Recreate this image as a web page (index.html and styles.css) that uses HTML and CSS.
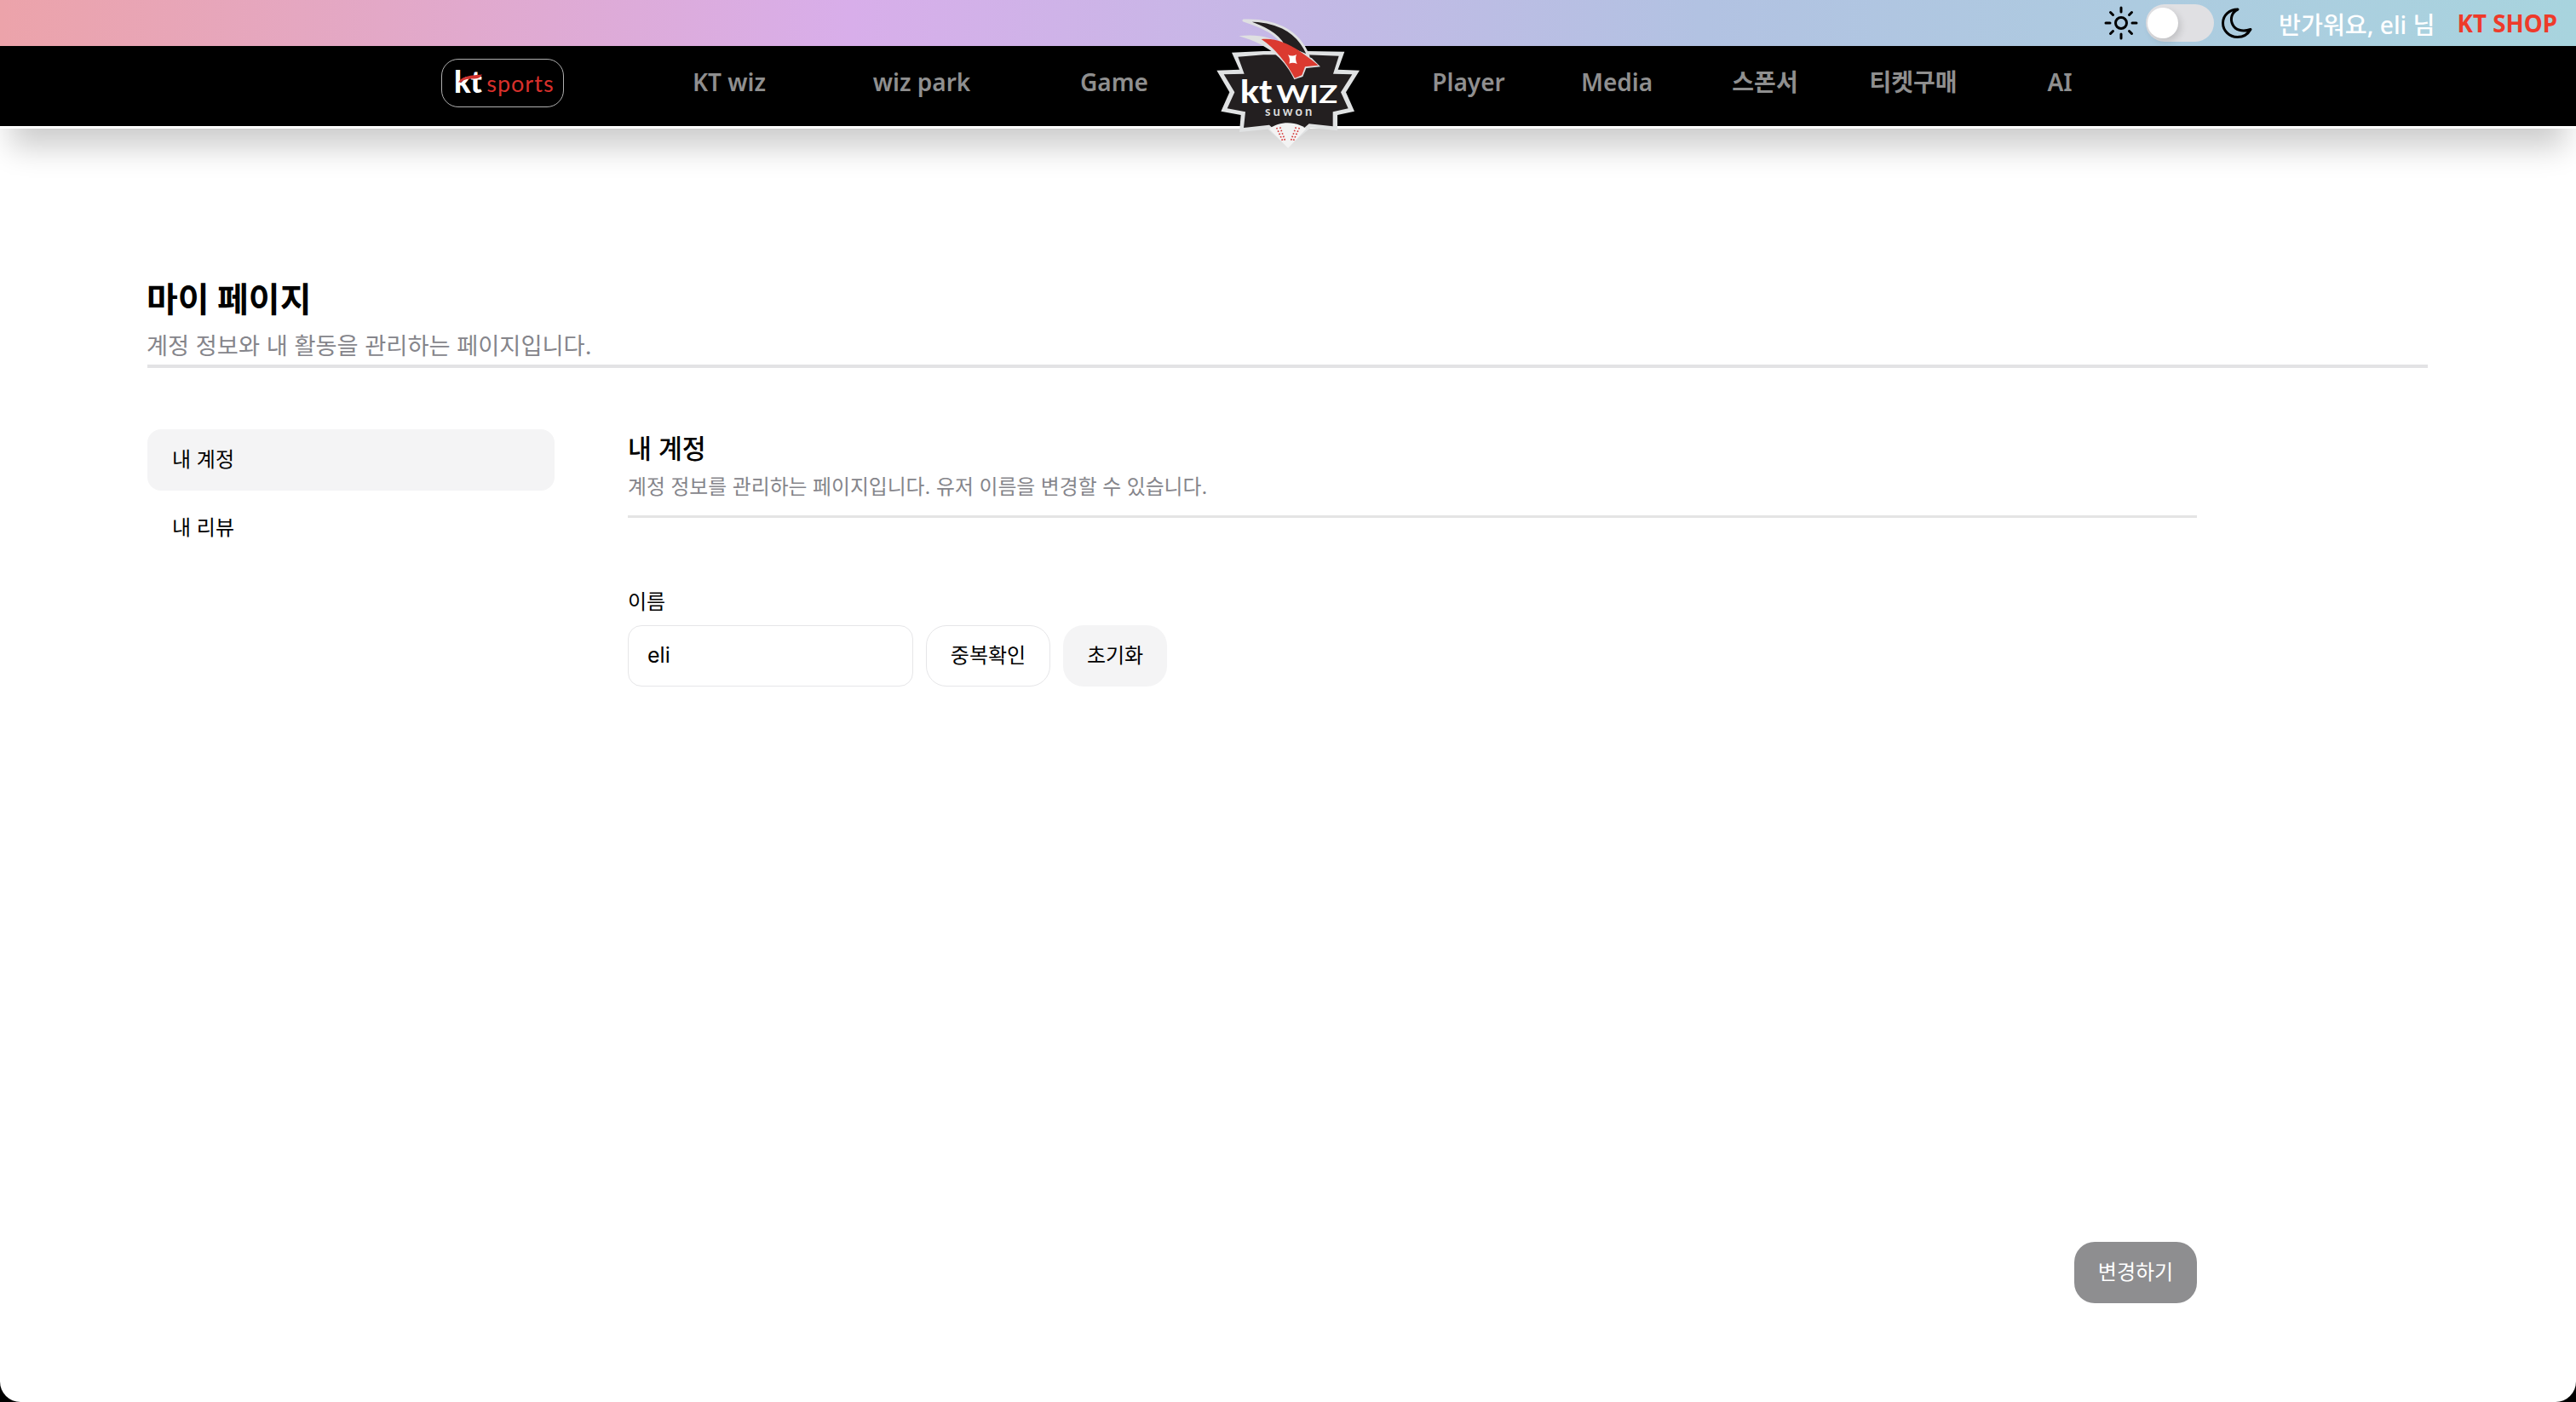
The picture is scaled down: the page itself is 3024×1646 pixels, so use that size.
FILE: index.html
```html
<!DOCTYPE html>
<html lang="ko">
<head>
<meta charset="utf-8">
<title>마이 페이지</title>
<link rel="stylesheet" href="styles.css">
</head>
<body>
<div class="app">
  <header class="header">
    <div class="topbar">
      <svg class="sun" viewBox="0 0 40 40" fill="none" stroke="#000" stroke-width="3" stroke-linecap="round"><circle cx="20" cy="20" r="6.500"/><path d="M20 2v5M20 33v5M2 20h5M33 20h5M7.500 7.500l3 3M29.500 29.500l3 3M7.500 32.500l3-3M29.500 10.500l3-3"/></svg>
      <div class="toggle"><span class="knob"></span></div>
      <svg class="moon" viewBox="0 0 36 36" fill="none" stroke="#000" stroke-width="3" stroke-linejoin="round"><path d="M19 2C12 5 9.500 13 13 20c3 6 11 9 21 5.500C31 31 25 34.500 18.500 34.500 9 34.500 1.500 27 1.500 18S9 2 19 2z"/></svg>
      <span class="greet">반가워요, eli 님</span>
      <a class="shop">KT SHOP</a>
    </div>
    <nav class="nav">
      <a class="brand">
        <span class="brand-kt">kt</span><span class="brand-sports">sports</span>
        <svg class="swoosh" viewBox="0 0 28 9"><path d="M0 9C4 3 10 1 28 0c-2 4-5 5-11 5C10 5 6 6 4 9z" fill="#d0322f"/></svg>
      </a>
      <ul class="menu menu-left">
        <li>KT wiz</li>
        <li>wiz park</li>
        <li>Game</li>
      </ul>
      <div class="crest">
        <svg class="crest-art" viewBox="0 0 690 510">
          <polygon points="138,155 250,150 400,150 535,152 512,215 588,218 540,295 570,362 510,375 510,430 415,420 335,490 265,425 165,435 170,375 100,362 130,295 85,218 165,215" fill="#e0e2e3"/>
          <polygon points="160,170 250,163 400,163 515,167 495,230 562,232 522,295 548,352 494,364 494,415 410,406 335,470 270,410 180,420 186,364 122,352 148,295 110,232 182,230" fill="#231f20"/>
          <path d="M180 42C280 38 370 70 408 168L320 130C300 90 250 65 180 42z" fill="#231f20" stroke="#dfe0e1" stroke-width="9" stroke-linejoin="round"/>
          <path d="M163 97C230 90 275 100 320 130L420 175 450 205 400 210 388 240 358 250C330 190 280 130 163 97z" fill="#dfe0e1"/>
          <path d="M242 108C310 100 370 140 443 200L396 205 385 235 360 245C330 190 290 140 242 108z" fill="#db3a30"/>
          <path d="M336 163C345 168 355 168 366 162 362 172 362 182 368 195 358 190 348 190 340 194 344 184 342 172 336 163z" fill="#fff"/>
          <path d="M270 424C305 396 365 396 400 424L336 492z" fill="#f3f3f3"/>
          <path d="M296 420L318 468M308 418L326 466M376 420L354 468M364 418L346 466" stroke="#d63a3a" stroke-width="5" stroke-dasharray="5 6" fill="none"/>
          <text class="crest-kt" x="168" y="333" textLength="112" lengthAdjust="spacingAndGlyphs">kt</text>
          <text class="crest-wiz" x="295" y="333" textLength="216" lengthAdjust="spacingAndGlyphs">WIZ</text>
          <text class="crest-suwon" x="255" y="378" textLength="166">suwon</text>
        </svg>
      </div>
      <ul class="menu menu-right">
        <li>Player</li>
        <li>Media</li>
        <li>스폰서</li>
        <li>티켓구매</li>
        <li class="menu-last">AI</li>
      </ul>
    </nav>
  </header>
  <main class="main">
    <section class="intro">
      <h1 class="title">마이 페이지</h1>
      <p class="lead">계정 정보와 내 활동을 관리하는 페이지입니다.</p>
    </section>
    <div class="layout">
      <aside class="side">
        <a class="side-item is-active">내 계정</a>
        <a class="side-item">내 리뷰</a>
      </aside>
      <section class="panel">
        <h2 class="panel-title">내 계정</h2>
        <p class="panel-lead">계정 정보를 관리하는 페이지입니다. 유저 이름을 변경할 수 있습니다.</p>
        <label class="label" for="name">이름</label>
        <div class="field-row">
          <input class="input" id="name" value="eli">
          <button class="btn btn-outline">중복확인</button>
          <button class="btn btn-soft">초기화</button>
        </div>
        <button class="btn btn-submit">변경하기</button>
      </section>
    </div>
  </main>
</div>
</body>
</html>
```

FILE: styles.css
```css
* { box-sizing: border-box; }
html, body { margin: 0; height: 100%; background: #000; }
body { font-family: "Inter", "Noto Sans CJK KR", sans-serif; color: #000; }
.app {
  min-height: 100vh;
  display: flex;
  flex-direction: column;
  background: #fff;
  border-radius: 0 0 24px 24px;
  overflow: hidden;
}
.header {
  position: relative;
  z-index: 2;
  border-bottom: 3px solid #fff;
  box-shadow: 0 34px 34px -12px rgba(0, 0, 0, .2);
}
.topbar {
  height: 54px;
  display: flex;
  align-items: center;
  justify-content: flex-end;
  padding-right: 22px;
  background: linear-gradient(90deg, #eca3aa 0%, #d8aeea 33%, #b2c2e2 66%, #a8d4de 100%);
}
.sun { width: 40px; height: 40px; margin-right: 9px; }
.toggle {
  width: 80px;
  height: 44px;
  border-radius: 22px;
  background: #e0e0e3;
  display: flex;
  align-items: center;
  padding-left: 2px;
  margin-right: 9px;
}
.knob {
  width: 36px;
  height: 36px;
  border-radius: 50%;
  background: #fff;
  box-shadow: 3px 4px 8px rgba(0, 0, 0, .14);
}
.moon { width: 36px; height: 36px; margin-right: 31px; }
.greet { color: #fff; font-size: 28.2px; font-weight: 500; margin-right: 26px; font-family: "Noto Sans", "Noto Sans CJK KR", sans-serif; }
.shop { color: #ee3a2a; font-size: 27.8px; font-weight: 700; font-family: "Noto Sans", "Noto Sans CJK KR", sans-serif; }
.nav {
  height: 94px;
  background: #000;
  display: flex;
  align-items: flex-start;
  padding-left: 518px;
}
.brand {
  position: relative;
  width: 144px;
  height: 57px;
  margin-top: 15px;
  margin-right: 81px;
  padding: 0 0 6px 14px;
  border: 1.5px solid #b0b0b0;
  border-radius: 20px;
  display: flex;
  align-items: center;
  gap: 6px;
  font-family: "Lato", sans-serif;
  line-height: 1;
}
.swoosh { position: absolute; left: 19px; top: 17px; width: 28px; height: 10px; }
.brand-kt { color: #fff; font-size: 36px; font-weight: 900; letter-spacing: -.5px; }
.brand-sports { color: #d8302b; font-size: 27px; font-weight: 400; padding-top: 6px; letter-spacing: 1px; }
.menu {
  display: flex;
  list-style: none;
  margin: 0;
  padding: 0;
  font-family: "Noto Sans", "Noto Sans CJK KR", sans-serif;
  font-size: 28px;
  font-weight: 600;
  color: #8f8f8f;
  line-height: 84px;
}
.menu li { text-align: center; }
.menu-left li { width: 226px; }
.menu-right li { width: 174px; }
.menu-right .menu-last { width: 170px; }
.crest { position: relative; width: 216px; height: 94px; }
.crest-art { position: absolute; left: -21px; top: -44px; width: 230px; height: 170px; }
.crest-kt { font: 900 116px "Lato", sans-serif; fill: #fff; }
.crest-wiz { font: 700 88px "Lato", sans-serif; fill: #fff; }
.crest-suwon { font: 700 44px "Lato", sans-serif; fill: #dcdcdc; }

.main {
  flex: 1;
  display: flex;
  flex-direction: column;
  padding: 173px 174px 116px 173px;
}
.intro { border-bottom: 4px solid #e3e3e5; padding-bottom: 1px; }
.title { margin: 0 0 0 -1px; font-size: 40px; line-height: 56px; font-weight: 700; }
.lead { margin: 7px 0 0 -1px; font-size: 27.25px; line-height: 40px; color: #85858b; }
.layout {
  flex: 1;
  display: grid;
  grid-template-columns: 478px 1842px;
  column-gap: 86px;
  margin-top: 72px;
}
.side { display: flex; flex-direction: column; gap: 8px; }
.side-item {
  height: 72px;
  display: flex;
  align-items: center;
  padding: 0 0 6px 29px;
  border-radius: 16px;
  font-size: 24px;
}
.is-active { background: #f4f4f5; }
.panel { display: flex; flex-direction: column; padding-top: 2px; }
.panel-title { margin: 0; font-size: 30.3px; line-height: 42px; font-weight: 500; }
.panel-lead {
  margin: 6px 0 0;
  padding-bottom: 15px;
  border-bottom: 3px solid #e4e4e4;
  font-size: 23.8px;
  line-height: 36px;
  color: #85858b;
}
.label { margin-top: 82px; font-size: 24px; line-height: 34px; }
.field-row { display: flex; gap: 15px; margin-top: 10px; }
.input {
  width: 335px;
  height: 72px;
  border: 1.5px solid #e6e6e8;
  border-radius: 16px;
  padding: 0 22px 2px;
  font: 25px "Inter", "Noto Sans CJK KR", sans-serif;
  color: #000;
  background: #fff;
}
.btn {
  height: 72px;
  border: 0;
  border-radius: 24px;
  font: 24px "Inter", "Noto Sans CJK KR", sans-serif;
  color: #000;
  padding: 0 0 6px;
}
.btn-outline { width: 146px; border: 1.5px solid #e6e6e8; background: #fff; }
.btn-soft { width: 122px; background: #f4f4f5; }
.btn-submit {
  width: 144px;
  margin-top: auto;
  align-self: flex-end;
  background: #8e8e90;
  color: #fff;
}
```
